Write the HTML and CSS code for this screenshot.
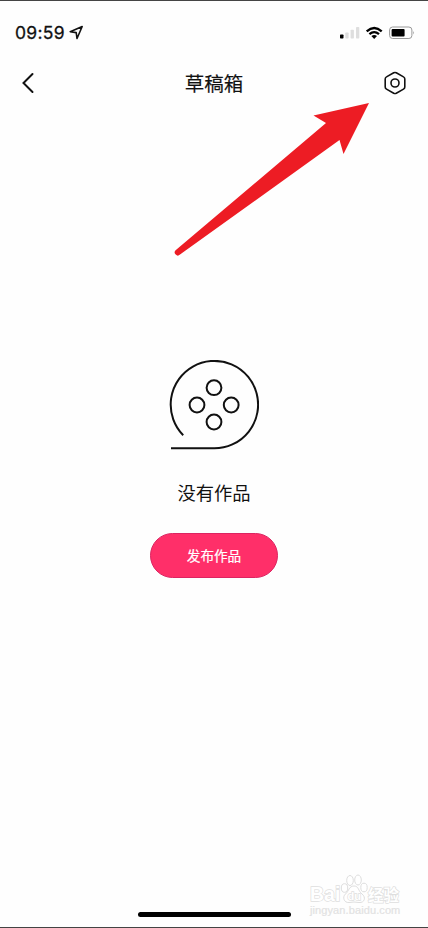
FILE: index.html
```html
<!DOCTYPE html>
<html lang="zh-CN">
<head>
<meta charset="utf-8">
<title>草稿箱</title>
<link rel="stylesheet" href="styles.css">
</head>
<body>
<div class="screen">
  <div class="status">
    <span class="time">09:59</span>
    <svg class="location" width="15" height="15" viewBox="0 0 15 15"><path d="M1.2 6.7 13.2 1.5 8 13.5 7.2 7.6Z"/></svg>
    <svg class="signals" width="76" height="14" viewBox="0 0 76 14">
      <rect x="0" y="8.5" width="3.5" height="4" rx=".7"/>
      <g fill="#dedede"><rect x="5.3" y="6.5" width="3.3" height="6" rx=".7"/><rect x="10.6" y="3.8" width="3.3" height="8.7" rx=".7"/><rect x="16" y="1" width="3.3" height="11.5" rx=".7"/></g>
      <g fill="none" stroke="#000" stroke-width="2.3"><path d="M26.7 5.3Q34.2-1.4 41.7 5.3"/><path d="M29.4 8.2Q34.2 4 39 8.2"/></g>
      <path d="M31.4 10Q34.2 7.8 37 10L34.2 12.9Z"/>
      <rect x="49.6" y="1" width="22.3" height="11.5" rx="3" fill="none" stroke="#999" stroke-width="1"/>
      <rect x="51.6" y="3" width="13" height="7.6" rx="1"/>
      <path d="M73.4 5Q74.8 6.8 73.4 8.6Z" fill="#888"/>
    </svg>
  </div>
  <header class="nav">
    <svg class="back" width="16" height="22" viewBox="0 0 16 22"><path d="M12.5 2 3.5 11 12.5 20"/></svg>
    <h1 class="title">草稿箱</h1>
    <svg class="settings" width="24" height="24" viewBox="0 0 24 24"><path d="M10.7 1.8Q12 1.1 13.3 1.8L20.5 5.9Q21.8 6.6 21.8 8V16Q21.8 17.4 20.5 18.1L13.3 22.2Q12 22.9 10.7 22.2L3.5 18.1Q2.2 17.4 2.2 16V8Q2.2 6.6 3.5 5.9Z"/><circle cx="12" cy="12" r="4"/></svg>
  </header>
  <main class="empty">
    <svg class="reel" width="90" height="90" viewBox="0 0 90 90"><path d="M14.2 75.2A43.7 43.7 0 1 1 45 88.3H2"/><circle cx="45" cy="27.7" r="7.4"/><circle cx="28" cy="45" r="7.4"/><circle cx="62.2" cy="45" r="7.4"/><circle cx="45" cy="62" r="7.4"/></svg>
    <p class="message">没有作品</p>
    <button class="publish">发布作品</button>
  </main>
  <div class="home"></div>
  <svg class="arrow" width="200" height="160" viewBox="170 100 200 160"><path d="M369 103 343.5 154 339.5 140 180 254.5A3 3 0 0 1 175.6 250.3L326 123 313.5 115.5Z"/></svg>
  <div class="watermark">
    <div class="brand">
      <span class="latin">Bai</span>
      <svg class="paw" width="28" height="30" viewBox="0 0 28 30"><ellipse cx="4.5" cy="14" rx="3.2" ry="4.3"/><ellipse cx="10" cy="6.5" rx="3.3" ry="5"/><ellipse cx="18" cy="6" rx="3.3" ry="5"/><ellipse cx="24" cy="13.5" rx="3.2" ry="4.3"/><path d="M14 12C9 12 9 17 5.5 20S4 29 9 28.5Q14 27.5 19 28.5C25 29 26 23 22 20S19 12 14 12Z"/><text x="7.6" y="25.5">du</text></svg>
      <span class="han">经验</span>
    </div>
    <div class="url">jingyan.baidu.com</div>
  </div>
</div>
</body>
</html>
```
FILE: styles.css
```css
* { box-sizing: border-box; }
body { margin: 0; background: #fefefe; font-family: "Liberation Sans", "Noto Sans CJK SC", sans-serif; color: #111; }
svg { display: block; flex: none; }
.screen { position: relative; display: flex; flex-direction: column; height: 928px; border-top: 1px solid #444; border-bottom: 1px solid #444; overflow: hidden; }
.status { display: flex; align-items: center; height: 62px; padding: 0 12px 0 15px; }
.time { padding-top: 1px; font: 400 17.5px/20px Inter, sans-serif; letter-spacing: .3px; color: #111; -webkit-text-stroke: .3px #111; }
.location { margin-left: 4px; fill: none; stroke: #111; stroke-width: 1.6; stroke-linejoin: round; }
.signals { margin-left: auto; margin-top: 1px; }
.nav { display: flex; align-items: center; justify-content: space-between; height: 40px; padding: 0 21px 0 20px; }
.back { margin-right: 8px; fill: none; stroke: #111; stroke-width: 2; stroke-linecap: round; }
.title { margin: 0 0 0 1px; font: 400 19.5px/28px "Noto Sans CJK SC", sans-serif; -webkit-text-stroke: .15px #111; }
.settings { fill: none; stroke: #111; stroke-width: 1.6; }
.empty { display: flex; flex-direction: column; align-items: center; padding-top: 257px; }
.reel { fill: none; stroke: #111; stroke-width: 2; }
.message { margin: 28px 0 0; font: 400 18.3px/28px "Noto Sans CJK SC", sans-serif; }
.publish { width: 128px; height: 45px; margin-top: 27px; padding: 0 0 2px; border: 1px solid #dc2461; border-radius: 23px; background: #ff2f69; color: #fff; font: 400 13.6px/20px "Noto Sans CJK SC", sans-serif; -webkit-text-stroke: .2px #fff; }
.home { width: 153px; height: 5px; margin: auto auto 10px; border-radius: 3px; background: #000; }
.arrow { position: absolute; left: 170px; top: 99px; fill: #ed1c24; }
.watermark { position: absolute; left: 310px; top: 873px; width: 92px; color: #fff; }
.brand { display: flex; height: 30px; align-items: flex-end; }
.latin { width: 30px; font: 700 19.5px/20px "Liberation Sans", sans-serif; -webkit-text-stroke: 1.4px #dedede; paint-order: stroke fill; }
.paw { fill: #fff; stroke: #dedede; stroke-width: 1; }
.paw text { font: 700 11px "Liberation Sans", sans-serif; fill: #fff; stroke-width: 1.3; paint-order: stroke fill; }
.han { font: 700 15.5px/19px "Noto Sans CJK SC", sans-serif; white-space: nowrap; -webkit-text-stroke: 1.4px #dedede; paint-order: stroke fill; }
.url { font: 400 11px/12px "Liberation Sans", sans-serif; letter-spacing: .1px; color: #e2e2e2; -webkit-text-stroke: .2px #e2e2e2; white-space: nowrap; }
```
